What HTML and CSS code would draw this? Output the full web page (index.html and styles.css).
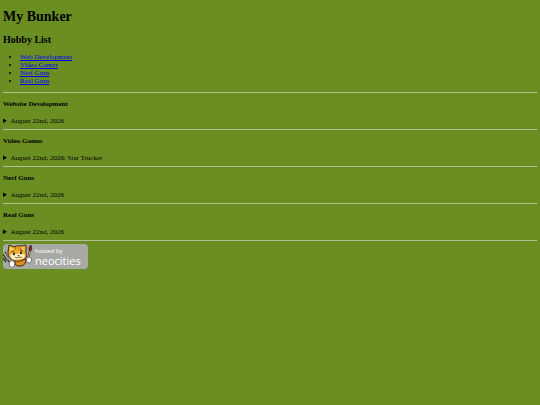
FILE: index.html
```html
<!DOCTYPE html>
<html lang="en">
<head>
<meta charset="utf-8">
<title>My Bunker</title>
<link rel="stylesheet" href="styles.css">
</head>
<body>
<h1>My Bunker</h1>
<h2>Hobby List</h2>
<ul class="hobbies">
<li><a href="#web">Web Development</a></li>
<li><a href="#games">Video Games</a></li>
<li><a href="#nerf">Nerf Guns</a></li>
<li><a href="#real">Real Guns</a></li>
</ul>
<hr>
<section id="web">
<h4>Website Development</h4>
<details><summary>August 22nd, 2026</summary></details>
</section>
<hr>
<section id="games">
<h4>Video Games</h4>
<details><summary>August 22nd, 2026: Star Trucker</summary></details>
</section>
<hr>
<section id="nerf">
<h4>Nerf Guns</h4>
<details><summary>August 22nd, 2026</summary></details>
</section>
<hr>
<section id="real">
<h4>Real Guns</h4>
<details><summary>August 22nd, 2026</summary></details>
</section>
<hr>
<a class="badge" href="#neocities">
<svg class="cat" viewBox="0 0 31 25" aria-hidden="true">
<path d="M0 10 L4 16 M2 8 L6 14 M0 14 L3 18 M4 15 L8 20" stroke="#35372e" stroke-width="1.4" fill="none"/>
<path d="M1 9 L5 16 M3 9 L6 14" stroke="#d8dcda" stroke-width=".6"/>
<path d="M12 16 Q11 23 17 22 Q23 22 23 15Z" fill="#df8b24" stroke="#3d2d1b"/>
<path d="M5 8 L6 1 L11 3 Q15 1 18 2 L23 1 L23 9 Q25 14 20 16 Q13 19 8 15 Q4 12 5 8Z" fill="#efaa2d" stroke="#3d2d1b"/>
<path d="M7 7 L7 3 L11 5Z M19 4 L22 3 L21 7Z" fill="#f8d56c"/>
<path d="M12 3 L13 6 M15 3 L16 5 M18 4 L17 6" stroke="#bd6820"/>
<path d="M7 11 Q10 9 13 10 Q18 8 22 11 Q22 15 17 15 Q10 17 8 14Z" fill="#fff0c6"/>
<path d="M8 8 L11 7 M17 6 L20 7" stroke="#593619" stroke-width=".8"/>
<ellipse cx="11" cy="10" rx="1" ry="1.4" fill="#24221c"/>
<ellipse cx="18" cy="9" rx="1" ry="1.4" fill="#24221c"/>
<path d="M14 11 H17 L15.5 12.5Z" fill="#a74725"/>
<path d="M12 13 Q14 15 15.5 13 Q17 14 19 13" fill="none" stroke="#574024" stroke-width=".8"/>
<path d="M27 6 L25 15" stroke="#493424" stroke-width="2"/>
<path d="M27 7 L25 14" stroke="#d6c39c" stroke-width=".8"/>
<path d="M26 6 Q25 3 28 1 Q30 4 28 7Z" fill="#8b2520" stroke="#3b211c" stroke-width=".5"/>
<ellipse cx="9" cy="20" rx="2.8" ry="3.4" fill="#fff" stroke="#504b3c" stroke-width=".7"/>
<ellipse cx="26" cy="16" rx="2.5" ry="3" fill="#fff" stroke="#504b3c" stroke-width=".7"/>
</svg>
<span class="label"><span class="hosted">hosted by</span><span class="brand">neocities</span></span>
</a>
</body>
</html>
```
FILE: styles.css
```css
body {
  margin: 9px 3px 3px;
  background: #6b8e23;
  color: #000;
  font: 7px/8px "Liberation Serif", "Times New Roman", serif;
}

h1 {
  margin: 0 0 9px;
  font-size: 14px;
  line-height: 16px;
}

h2 {
  margin: 0 0 7px;
  font-size: 10px;
  line-height: 12px;
}

.hobbies {
  margin: 0 0 7px;
  padding-left: 17px;
}

a {
  color: #0000ee;
}

hr {
  height: 1px;
  margin: 0 0 7px;
  border: 0;
  background: #b2bf91;
}

h4 {
  margin: 0 0 9px;
  font-size: 7px;
  line-height: 8px;
}

details {
  margin-bottom: 4px;
}

.badge {
  display: flex;
  width: 85px;
  height: 25px;
  margin-top: -4px;
  border-radius: 4px;
  background: #a7a9a5;
  color: #fff;
  font-family: "Open Sans", "Noto Sans", sans-serif;
  text-decoration: none;
}

.cat {
  flex: none;
  width: 31px;
  height: 25px;
}

.label {
  display: flex;
  flex-direction: column;
  padding: 3px 0 0 1px;
}

.hosted {
  font-size: 6px;
  line-height: 8px;
}

.brand {
  font-size: 11px;
  line-height: 11px;
}
```
